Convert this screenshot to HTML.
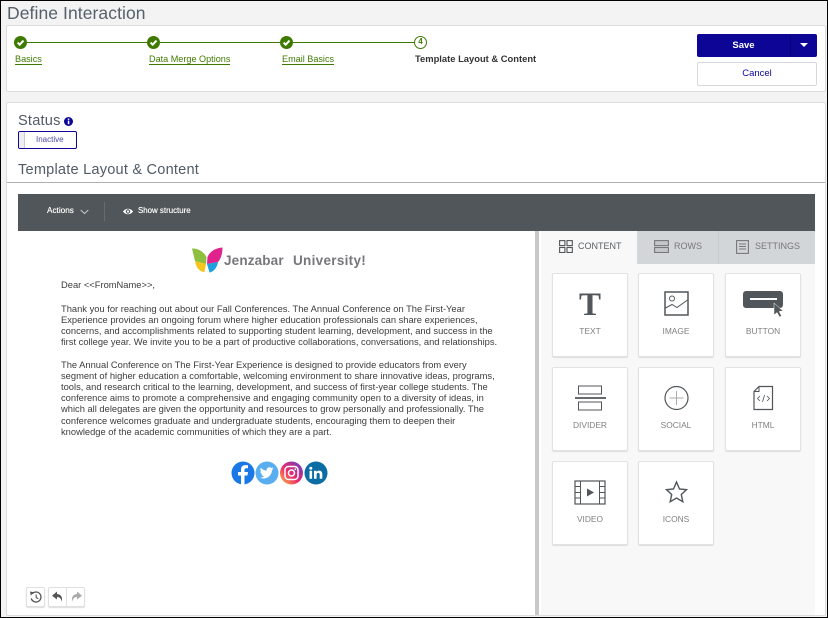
<!DOCTYPE html>
<html><head><meta charset="utf-8"><style>
*{box-sizing:border-box}
html,body{margin:0;padding:0}
body{width:828px;height:618px;position:relative;overflow:hidden;background:#f3f3f3;font-family:"Liberation Sans",sans-serif;color:#333}
.a{position:absolute}
.t{position:absolute;white-space:nowrap}
.panel{position:absolute;background:#fff;border:1px solid #dcdcdc;border-radius:2px}
.chk{position:absolute;top:36px;width:13px;height:13px}
.lnk{position:absolute;top:54px;font-size:9.1px;line-height:10px;height:11px;color:#3f7a00;border-bottom:1px solid #3f7a00;white-space:nowrap}
.ln{position:absolute;top:42px;height:1px;background:#3f7a00}
.h{font-size:14.6px;color:#505b66;letter-spacing:.2px}
.e{position:absolute;left:61px;font-size:9.35px;line-height:11px;color:#3c3c3c;white-space:nowrap}
.tile{position:absolute;width:76px;height:84px;background:#fff;border:1px solid #e2e2e2;border-radius:2px;box-shadow:0 1px 1px #ddd}
.tile span{position:absolute;left:0;right:0;top:52px;text-align:center;font-size:8.4px;line-height:11px;color:#808080}
.tile svg{position:absolute;left:0;top:0}
.tab{position:absolute;top:231px;height:33px;font-size:9px;line-height:30px;color:#777}
</style></head><body>
<div class="t" style="left:7px;top:3px;font-size:17.5px;line-height:21px;color:#55606b;letter-spacing:.08px">Define Interaction</div>

<div class="panel" style="left:6px;top:25px;width:820px;height:67px"></div>
<svg class="chk" style="left:14px" viewBox="0 0 13 13"><circle cx="6.5" cy="6.5" r="6.5" fill="#3f7a00"/><path d="M3.6 6.6L5.7 8.7L9.5 4.6" stroke="#fff" stroke-width="2" fill="none"/></svg>
<svg class="chk" style="left:147px" viewBox="0 0 13 13"><circle cx="6.5" cy="6.5" r="6.5" fill="#3f7a00"/><path d="M3.6 6.6L5.7 8.7L9.5 4.6" stroke="#fff" stroke-width="2" fill="none"/></svg>
<svg class="chk" style="left:280px" viewBox="0 0 13 13"><circle cx="6.5" cy="6.5" r="6.5" fill="#3f7a00"/><path d="M3.6 6.6L5.7 8.7L9.5 4.6" stroke="#fff" stroke-width="2" fill="none"/></svg>
<div class="ln" style="left:27px;width:120px"></div>
<div class="ln" style="left:160px;width:120px"></div>
<div class="ln" style="left:293px;width:121px"></div>
<div class="a" style="left:414px;top:36px;width:13px;height:13px;border:1px solid #3f7a00;border-radius:50%;background:#fff;font-size:8px;font-weight:bold;line-height:10px;text-align:center;color:#3f7a00">4</div>
<div class="lnk" style="left:15px">Basics</div>
<div class="lnk" style="left:149px">Data Merge Options</div>
<div class="lnk" style="left:282px">Email Basics</div>
<div class="t" style="left:415px;top:53px;font-size:9.4px;line-height:12px;font-weight:bold;color:#333">Template Layout &amp; Content</div>

<div class="a" style="left:697px;top:34px;width:120px;height:23px;background:#0d0596;border-radius:2px"></div>
<div class="a" style="left:790px;top:34px;width:1px;height:23px;background:#0a0470"></div>
<div class="t" style="left:697px;top:35px;width:93px;text-align:center;font-size:9.5px;line-height:22px;font-weight:bold;color:#fff">Save</div>
<div class="a" style="left:800px;top:43px;width:0;height:0;border-left:4px solid transparent;border-right:4px solid transparent;border-top:4px solid #fff"></div>
<div class="a" style="left:697px;top:62px;width:120px;height:24px;background:#fff;border:1px solid #d8d8d8;border-radius:2px;text-align:center;font-size:9.5px;line-height:21px;color:#0d0596">Cancel</div>

<div class="panel" style="left:6px;top:102px;width:820px;height:514px"></div>
<div class="t h" style="left:18px;top:112px;line-height:18px">Status</div>
<svg class="a" style="left:64px;top:117px" width="9" height="9" viewBox="0 0 9 9"><circle cx="4.5" cy="4.5" r="4.5" fill="#0d0596"/><rect x="3.8" y="1.5" width="1.5" height="1.4" fill="#fff"/><rect x="3.8" y="3.6" width="1.5" height="3.6" fill="#fff"/></svg>
<div class="a" style="left:18px;top:131px;width:59px;height:18px;border:1px solid #0d0596;border-radius:2px;background:#fff;overflow:hidden"><div class="a" style="left:0;top:0;width:6px;height:16px;background:#eeeef2;border-right:1px solid #ccc"></div><div class="t" style="left:17px;top:0;font-size:8px;line-height:15px;color:#4d49a8">Inactive</div></div>
<div class="t h" style="left:18px;top:161px;line-height:18px">Template Layout &amp; Content</div>
<div class="a" style="left:7px;top:182px;width:818px;height:1px;background:#b0b0b0"></div>

<div class="a" style="left:18px;top:194px;width:797px;height:37px;background:#505659"></div>
<div class="t" style="left:47px;top:205px;font-size:8.2px;line-height:12px;color:#fff;text-shadow:0 0 .4px #fff">Actions</div>
<svg class="a" style="left:80px;top:209px" width="9" height="6" viewBox="0 0 9 6"><path d="M.7 1L4.5 4.6L8.3 1" stroke="#ccc" fill="none"/></svg>
<div class="a" style="left:104px;top:202px;width:1px;height:19px;background:#666b6e"></div>
<svg class="a" style="left:123px;top:207px" width="10" height="9" viewBox="0 0 10 9"><path d="M0 4.5C2.5 .8 7.5 .8 10 4.5C7.5 8.2 2.5 8.2 0 4.5Z" fill="#fff"/><circle cx="5" cy="4.5" r="2.2" fill="#505659"/><circle cx="5" cy="4.5" r="1.1" fill="#fff"/></svg>
<div class="t" style="left:138px;top:205px;font-size:7.9px;line-height:12px;color:#fff;text-shadow:0 0 .4px #fff">Show structure</div>

<!-- logo -->
<svg class="a" style="left:192px;top:247px;filter:blur(.3px)" width="31" height="26" viewBox="0 0 31 26"><path d="M0 1.500C6 1 12 5 14.500 10L14 17L3 14Z" fill="#8fbf3f"/><path d="M3 14L14 17L12.500 25C8 25 4 21 3 14Z" fill="#f6c51c"/><path d="M15.500 10C18 4 24 1 30.500 .5C30.500 6 29 12 26 15L15 17Z" fill="#e0238c"/><path d="M15 17L26 15C25.500 20 21.500 25 17.500 25.500Z" fill="#1ea0dc"/></svg>
<div class="t" style="left:224px;top:252px;font-size:13.5px;line-height:18px;font-weight:bold;color:#77777b;letter-spacing:.15px">Jenzabar</div>
<div class="t" style="left:293px;top:252px;font-size:13.5px;line-height:18px;font-weight:bold;color:#77777b;letter-spacing:.3px">University!</div>

<div class="e" style="top:280px">Dear &lt;&lt;FromName&gt;&gt;,</div>
<div class="e" style="top:304px">Thank you for reaching out about our Fall Conferences. The Annual Conference on The First-Year</div>
<div class="e" style="top:315px">Experience provides an ongoing forum where higher education professionals can share experiences,</div>
<div class="e" style="top:326px">concerns, and accomplishments related to supporting student learning, development, and success in the</div>
<div class="e" style="top:337px">first college year. We invite you to be a part of productive collaborations, conversations, and relationships.</div>
<div class="e" style="top:360px">The Annual Conference on The First-Year Experience is designed to provide educators from every</div>
<div class="e" style="top:371px">segment of higher education a comfortable, welcoming environment to share innovative ideas, programs,</div>
<div class="e" style="top:382px">tools, and research critical to the learning, development, and success of first-year college students. The</div>
<div class="e" style="top:393px">conference aims to promote a comprehensive and engaging community open to a diversity of ideas, in</div>
<div class="e" style="top:404px">which all delegates are given the opportunity and resources to grow personally and professionally. The</div>
<div class="e" style="top:416px">conference welcomes graduate and undergraduate students, encouraging them to deepen their</div>
<div class="e" style="top:427px">knowledge of the academic communities of which they are a part.</div>

<!-- social -->
<svg class="a" style="left:231px;top:461px" width="97" height="24" viewBox="0 0 97 24">
<defs><linearGradient id="ig" x1="0" y1="1" x2="1" y2="0"><stop offset="0" stop-color="#fdc23c"/><stop offset=".45" stop-color="#ee2a6b"/><stop offset="1" stop-color="#5b3fd0"/></linearGradient></defs>
<circle cx="12" cy="12" r="11.5" fill="#1a78e6"/><path d="M13.5 23.5V14.5H16.5L17 11H13.5V9C13.5 8 14 7.3 15.3 7.3H17V4.3C16 4.2 15.2 4.1 14.4 4.1C11.7 4.1 10 5.7 10 8.6V11H7V14.5H10V23.5Z" fill="#fff"/>
<circle cx="36" cy="12" r="11.5" fill="#59aef0"/><path d="M29 16.5C31 17.8 34.5 18 37 16.3C39.8 14.4 41 11.6 40.9 9.3C41.6 8.8 42.2 8.2 42.6 7.5C42 7.8 41.3 8 40.7 8C41.4 7.6 41.9 7 42.1 6.2C41.5 6.6 40.8 6.8 40.1 7C38.6 5.4 35.4 6.4 35.6 9.6C33.3 9.5 31.2 8.3 29.8 6.7C29 8 29.4 9.8 30.7 10.7C30.2 10.7 29.7 10.5 29.3 10.3C29.3 11.8 30.3 13 31.7 13.3C31.3 13.4 30.8 13.4 30.4 13.3C30.8 14.5 31.9 15.3 33.2 15.4C32 16.3 30.5 16.7 29 16.5Z" fill="#fff"/>
<circle cx="60.500" cy="12" r="11.500" fill="url(#ig)"/><rect x="54" y="5.500" width="13" height="13" rx="3.500" fill="none" stroke="#fff" stroke-width="1.500"/><circle cx="60.500" cy="12" r="3" fill="none" stroke="#fff" stroke-width="1.500"/><circle cx="64.300" cy="8.200" r=".9" fill="#fff"/>
<circle cx="85" cy="12" r="11.500" fill="#0a6ea4"/><rect x="78.500" y="9.800" width="2.600" height="8" fill="#fff"/><circle cx="79.800" cy="7.300" r="1.500" fill="#fff"/><path d="M83 9.800H85.500V11C86 10.100 87 9.600 88.100 9.600C90.400 9.600 91.300 11 91.300 13.300V17.800H88.700V13.800C88.700 12.600 88.300 11.900 87.300 11.900C86.200 11.900 85.600 12.600 85.600 13.800V17.800H83Z" fill="#fff"/>
</svg>

<!-- history -->
<div class="a" style="left:26px;top:587px;width:19px;height:20px;background:#fff;border:1px solid #e0e0e0;border-radius:2px;box-shadow:0 1px 1px #ddd"></div>
<div class="a" style="left:48px;top:587px;width:37px;height:20px;background:#fff;border:1px solid #e0e0e0;border-radius:2px;box-shadow:0 1px 1px #ddd"></div>
<div class="a" style="left:66px;top:587px;width:1px;height:20px;background:#e0e0e0"></div>
<svg class="a" style="left:29px;top:590px" width="14" height="14" viewBox="0 0 14 14"><path d="M3.200 3.700A5 5 0 1 1 2.200 8.500" fill="none" stroke="#555" stroke-width="1.300"/><path d="M1 1.500L5 2.200L1.800 5.500Z" fill="#555"/><path d="M7.200 4.500V7.500L9.300 8.800" fill="none" stroke="#555" stroke-width="1.100"/></svg>
<svg class="a" style="left:51px;top:590px" width="13" height="13" viewBox="0 0 13 13"><path d="M6 1.500L1 5.700L6 9.500V7C8.700 7 10 8.500 10.800 11.500C11.800 7.500 10.200 4.300 6 4Z" fill="#555"/></svg>
<svg class="a" style="left:70px;top:590px" width="13" height="13" viewBox="0 0 13 13"><path d="M7 1.500L12 5.700L7 9.500V7C4.300 7 3 8.500 2.200 11.500C1.200 7.500 2.800 4.300 7 4Z" fill="#aaa"/></svg>

<!-- splitter + side -->
<div class="a" style="left:535px;top:231px;width:4px;height:384px;background:#c8c8c8"></div>
<div class="a" style="left:541px;top:231px;width:274px;height:384px;background:#f8f8f8"></div>
<div class="a" style="left:541px;top:231px;width:274px;height:33px;background:#d3d6d9"></div>
<div class="a" style="left:541px;top:231px;width:96px;height:34px;background:#f8f8f8"></div>
<div class="a" style="left:718px;top:231px;width:1px;height:33px;background:#c8cbce"></div>
<div class="tab" style="left:578px;color:#5a6066">CONTENT</div>
<div class="tab" style="left:674px">ROWS</div>
<div class="tab" style="left:755px">SETTINGS</div>
<svg class="a" style="left:559px;top:240px" width="14" height="13" viewBox="0 0 14 13" fill="none" stroke="#505659" stroke-width="1.100"><rect x=".6" y=".6" width="5.300" height="5"/><rect x="8" y=".6" width="5.300" height="5"/><rect x=".6" y="7.500" width="5.300" height="5"/><rect x="8" y="7.500" width="5.300" height="5"/></svg>
<svg class="a" style="left:654px;top:240px" width="15" height="13" viewBox="0 0 15 13" fill="#c4c7ca" stroke="#777" stroke-width="1.100"><rect x=".6" y=".6" width="13.800" height="5"/><rect x=".6" y="7.500" width="13.800" height="5"/></svg>
<svg class="a" style="left:736px;top:240px" width="13" height="14" viewBox="0 0 13 14" fill="none" stroke="#777" stroke-width="1.100"><rect x=".6" y=".6" width="11.800" height="12.800"/><path d="M3 4H10M3 6.500H10M3 9H10" stroke-width=".9"/></svg>

<div class="tile" style="left:552px;top:273px"><svg width="76" height="50"><text x="37" y="41" text-anchor="middle" font-family="Liberation Serif" font-weight="bold" font-size="33" fill="#505659">T</text></svg><span>TEXT</span></div>
<div class="tile" style="left:638px;top:273px"><svg width="76" height="50" fill="none" stroke="#505659"><rect x="26" y="18" width="23" height="23" stroke-width="1.500"/><circle cx="33" cy="24.500" r="2.500" stroke-width="1"/><path d="M26.500 34L33 30.500L38 33.500L48.500 26" stroke-width="1"/></svg><span>IMAGE</span></div>
<div class="tile" style="left:725px;top:273px"><svg width="76" height="50"><rect x="17" y="17" width="40" height="17" rx="3" fill="#505659"/><rect x="24" y="24" width="27" height="2" fill="#fff"/><path d="M48 29V41L51 38.500L53.500 43L55.500 42L53.200 37.500L57 37Z" fill="#505659" stroke="#fff" stroke-width=".5"/></svg><span>BUTTON</span></div>
<div class="tile" style="left:552px;top:367px"><svg width="76" height="50" fill="none" stroke="#505659"><rect x="25.500" y="18" width="23" height="8"/><rect x="25.500" y="34" width="23" height="8"/><path d="M22 30H53" stroke-width="1.800"/></svg><span>DIVIDER</span></div>
<div class="tile" style="left:638px;top:367px"><svg width="76" height="50" fill="none"><circle cx="37.500" cy="30" r="11.500" stroke="#505659" stroke-width="1.200"/><path d="M37.500 23V37M30.500 30H44.500" stroke="#aaa"/></svg><span>SOCIAL</span></div>
<div class="tile" style="left:725px;top:367px"><svg width="76" height="50" fill="none" stroke="#505659"><path d="M33 18.500H46.500V41.500H28V23.500Z" stroke-width="1.200"/><path d="M33 18.500V23.500H28" stroke-width="1"/><path d="M34 28L31.500 30.500L34 33M41 28L43.500 30.500L41 33M38.500 27L36.500 34" stroke-width=".8"/></svg><span>HTML</span></div>
<div class="tile" style="left:552px;top:461px"><svg width="76" height="50" fill="none" stroke="#505659"><rect x="22" y="19" width="30" height="23" stroke-width="1.200"/><path d="M27.500 19V42M46.500 19V42M22 24.500H27.500M22 30.500H27.500M22 36H27.500M46.500 24.500H52M46.500 30.500H52M46.500 36H52" stroke-width="1"/><path d="M34 26.500L41 30.500L34 34.500Z" fill="#505659" stroke="none"/></svg><span>VIDEO</span></div>
<div class="tile" style="left:638px;top:461px"><svg width="76" height="50"><path d="M37.500 20L40.500 27L47.500 27.700L42.300 32.500L43.800 39.700L37.500 36L31.200 39.700L32.700 32.500L27.500 27.700L34.500 27Z" fill="none" stroke="#505659" stroke-width="1.400"/></svg><span>ICONS</span></div>

<!-- screenshot frame -->
<div class="a" style="left:0;top:0;width:828px;height:618px;border:1px solid #000;pointer-events:none"></div>
</body></html>
